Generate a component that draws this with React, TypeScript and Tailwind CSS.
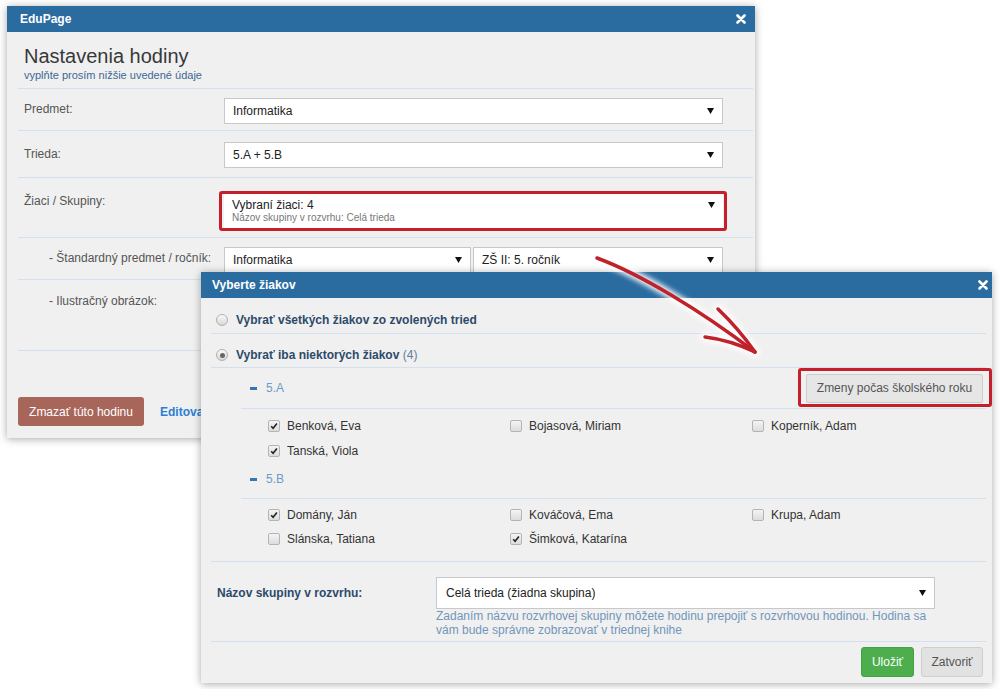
import React from "react";

function Caret() {
  return (
    <svg width="7" height="6" viewBox="0 0 7 6" className="shrink-0">
      <path d="M0 0H7L3.5 6Z" fill="#111" />
    </svg>
  );
}

function CloseX() {
  return (
    <svg width="10" height="10" viewBox="0 0 10 10">
      <path d="M1.5 1.5L8.5 8.5M8.5 1.5L1.5 8.5" stroke="#fff" strokeWidth="2.6" strokeLinecap="round" />
    </svg>
  );
}

function Select({ children, className = "" }: { children: React.ReactNode; className?: string }) {
  return (
    <div
      className={`flex items-center justify-between bg-white border border-[#c8c8c8] pl-[8px] pr-[8px] text-[12px] text-[#222] ${className}`}
    >
      <span>{children}</span>
      <Caret />
    </div>
  );
}

function Checkbox({ checked }: { checked: boolean }) {
  return (
    <span className="flex h-[12px] w-[12px] shrink-0 items-center justify-center rounded-[2px] border border-[#b4b4b4] bg-gradient-to-b from-[#f4f4f4] to-[#dcdcdc]">
      {checked && (
        <svg width="8" height="8" viewBox="0 0 8 8">
          <path d="M1.2 4.3L3.1 6.2L6.9 1.4" stroke="#222" strokeWidth="1.6" fill="none" />
        </svg>
      )}
    </span>
  );
}

function Radio({ checked }: { checked: boolean }) {
  return (
    <span className="flex h-[12px] w-[12px] shrink-0 items-center justify-center rounded-full border border-[#b0b0b0] bg-gradient-to-b from-[#fafafa] to-[#d8d8d8]">
      {checked && <span className="h-[5px] w-[5px] rounded-full bg-[#666]" />}
    </span>
  );
}

function Student({ name, checked }: { name: string; checked: boolean }) {
  return (
    <div className="flex items-center gap-[7px]">
      <Checkbox checked={checked} />
      <span>{name}</span>
    </div>
  );
}

export default function App() {
  return (
    <div className="relative h-[689px] w-[1000px] overflow-hidden bg-white font-['Liberation_Sans',Arial,sans-serif]">
      {/* Nastavenia hodiny */}
      <div className="absolute left-[7px] top-[6px] h-[432px] w-[748px] bg-[#f0f0f0] shadow-[0_1px_8px_rgba(0,0,0,0.35)]">
        <div className="flex h-[26px] items-center justify-between bg-[#2b6ca0] pl-[13px] pr-[9px]">
          <span className="text-[12px] font-bold text-white">EduPage</span>
          <CloseX />
        </div>
        <div className="pl-[11px] pr-[2px]">
          <div className="border-b border-[#d3e1ee] pb-[6px] pl-[6px] pt-[12px]">
            <h1 className="text-[20px] leading-[24px] text-[#383838]">Nastavenia hodiny</h1>
            <p className="mt-[1px] text-[11px] leading-[13px] text-[#3c6894]">vyplňte prosím nižšie uvedené údaje</p>
          </div>

          <div className="flex border-b border-[#d3e1ee] pb-[6px] pt-[9px]">
            <div className="w-[206px] pl-[6px] pt-[3px] text-[12px] leading-[16px] text-[#555]">Predmet:</div>
            <Select className="h-[26px] w-[499px]">Informatika</Select>
          </div>

          <div className="flex border-b border-[#d3e1ee] pb-[9px] pt-[11px]">
            <div className="w-[206px] pl-[6px] pt-[4px] text-[12px] leading-[16px] text-[#555]">Trieda:</div>
            <Select className="h-[26px] w-[499px]">5.A + 5.B</Select>
          </div>

          <div className="flex border-b border-[#d3e1ee] pb-[6px] pt-[13px]">
            <div className="w-[206px] pl-[6px] pt-[2px] text-[12px] leading-[16px] text-[#555]">Žiaci / Skupiny:</div>
            <div className="relative mt-[3px] mb-[3px] flex h-[34px] w-[499px] justify-between bg-white pl-[8px] pr-[8px] pt-[4px]">
              <div>
                <div className="text-[12px] leading-[14px] text-[#222]">Vybraní žiaci: 4</div>
                <div className="text-[10px] leading-[12px] text-[#777]">Názov skupiny v rozvrhu: Celá trieda</div>
              </div>
              <div className="pt-[4px]">
                <Caret />
              </div>
              <span className="absolute -bottom-[3px] -left-[5px] -right-[4px] -top-[3px] rounded-[3px] border-[3px] border-[#c3202b]" />
            </div>
          </div>

          <div className="flex border-b border-[#d3e1ee] pb-[6px] pt-[9px]">
            <div className="w-[206px] pl-[31px] pt-[3px] text-[12px] leading-[16px] text-[#555]">- Štandardný predmet / ročník:</div>
            <div className="flex w-[499px] gap-[2px]">
              <Select className="h-[26px] w-[247px]">Informatika</Select>
              <Select className="h-[26px] w-[250px]">ZŠ II: 5. ročník</Select>
            </div>
          </div>

          <div className="h-[71px] border-b border-[#d3e1ee] pl-[31px] pt-[13px] text-[12px] leading-[16px] text-[#555]">
            - Ilustračný obrázok:
          </div>

          <div className="mt-[46px] flex items-center gap-[16px]">
            <button className="h-[29px] w-[126px] rounded-[3px] bg-[#a8655a] text-[12px] text-white">Zmazať túto hodinu</button>
            <span className="text-[12px] font-bold text-[#2a7fd4]">Editovať</span>
          </div>
        </div>
      </div>

      {/* Vyberte žiakov */}
      <div className="absolute left-[201px] top-[272px] w-[791px] bg-[#f0f0f0] shadow-[0_1px_8px_rgba(0,0,0,0.35)]">
        <div className="flex h-[26px] items-center justify-between bg-[#2b6ca0] pl-[11px] pr-[4px]">
          <span className="text-[12px] font-bold text-white">Vyberte žiakov</span>
          <CloseX />
        </div>
        <div className="pl-[10px] pr-[6px] text-[12px] text-[#333]">
          <div className="flex h-[36px] items-start gap-[8px] border-b border-[#d3e1ee] pl-[5px] pt-[14px]">
            <span className="pt-[2px]">
              <Radio checked={false} />
            </span>
            <span className="font-bold leading-[16px] text-[#2c4a6a]">Vybrať všetkých žiakov zo zvolených tried</span>
          </div>
          <div className="flex h-[34px] items-start gap-[8px] border-b border-[#d3e1ee] pl-[5px] pt-[13px]">
            <span className="pt-[2px]">
              <Radio checked={true} />
            </span>
            <span className="leading-[16px]">
              <span className="font-bold text-[#2c4a6a]">Vybrať iba niektorých žiakov</span>
              <span className="text-[#5f7f9f]"> (4)</span>
            </span>
          </div>

          <div className="ml-[30px]">
            <div className="flex h-[41px] items-center justify-between border-b border-[#d3e1ee] pl-[9px] pr-[3px]">
              <div className="flex items-center gap-[9px]">
                <span className="h-[3px] w-[7px] bg-[#3a75b0]" />
                <span className="text-[#6e9bc8]">5.A</span>
              </div>
              <div className="relative">
                <button className="h-[29px] w-[177px] rounded-[2px] border border-[#cdcdcd] bg-[#e6e6e6] text-[12px] text-[#555]">
                  Zmeny počas školského roku
                </button>
                <span className="absolute -bottom-[4px] -left-[8px] -right-[9px] -top-[6px] rounded-[3px] border-[3px] border-[#c3202b]" />
              </div>
            </div>
            <div className="grid grid-cols-[242px_242px_1fr] pl-[27px] pt-[4px] [&>div]:h-[25px]">
              <Student name="Benková, Eva" checked={true} />
              <Student name="Bojasová, Miriam" checked={false} />
              <Student name="Koperník, Adam" checked={false} />
              <Student name="Tanská, Viola" checked={true} />
            </div>

            <div className="flex h-[36px] items-start gap-[9px] border-b border-[#d3e1ee] pl-[9px] pt-[8px]">
              <span className="mt-[7px] h-[3px] w-[7px] bg-[#3a75b0]" />
              <span className="leading-[16px] text-[#6e9bc8]">5.B</span>
            </div>
            <div className="grid grid-cols-[242px_242px_1fr] pb-[10px] pl-[27px] pt-[4px] [&>div]:h-[24px]">
              <Student name="Domány, Ján" checked={true} />
              <Student name="Kováčová, Ema" checked={false} />
              <Student name="Krupa, Adam" checked={false} />
              <Student name="Slánska, Tatiana" checked={false} />
              <Student name="Šimková, Katarína" checked={true} />
            </div>
          </div>

          <div className="flex border-b border-t border-[#d3e1ee] pb-[4px] pt-[15px]">
            <div className="flex h-[31px] w-[225px] items-center pl-[6px] text-[12px] font-bold text-[#2c4a6a]">
              Názov skupiny v rozvrhu:
            </div>
            <div className="w-[499px]">
              <Select className="h-[32px] w-[499px] pl-[9px]">Celá trieda (žiadna skupina)</Select>
              <p className="text-[12px] leading-[14px] text-[#7096bb]">
                Zadaním názvu rozvrhovej skupiny môžete hodinu prepojiť s rozvrhovou hodinou. Hodina sa
                <br />
                vám bude správne zobrazovať v triednej knihe
              </p>
            </div>
          </div>

          <div className="flex justify-end gap-[7px] pb-[6px] pr-[3px] pt-[5px]">
            <button className="h-[30px] w-[53px] rounded-[3px] border border-[#46a046] bg-[#4cae4c] text-[12px] text-white">Uložiť</button>
            <button className="h-[30px] w-[62px] rounded-[3px] border border-[#cfcfcf] bg-[#e2e2e2] text-[12px] text-[#555]">Zatvoriť</button>
          </div>
        </div>
      </div>

      {/* annotation arrow */}
      <svg className="pointer-events-none absolute left-0 top-0" width="1000" height="689" viewBox="0 0 1000 689">
        <defs>
          <filter id="glow" x="-20%" y="-20%" width="140%" height="140%">
            <feGaussianBlur stdDeviation="2.5" />
          </filter>
        </defs>
        <g stroke="#fff" strokeWidth="9" fill="none" strokeLinecap="round" opacity="0.9" filter="url(#glow)">
          <path d="M597 258 C640 274 700 310 755 352" />
          <path d="M718 309 Q738 328 755 352" />
          <path d="M705 337 Q730 340 755 352" />
        </g>
        <g stroke="#c1212b" strokeWidth="3.5" fill="none" strokeLinecap="round">
          <path d="M597 258 C640 274 700 310 755 352" />
          <path d="M718 309 Q738 328 755 352" />
          <path d="M705 337 Q730 340 755 352" />
        </g>
      </svg>
    </div>
  );
}
